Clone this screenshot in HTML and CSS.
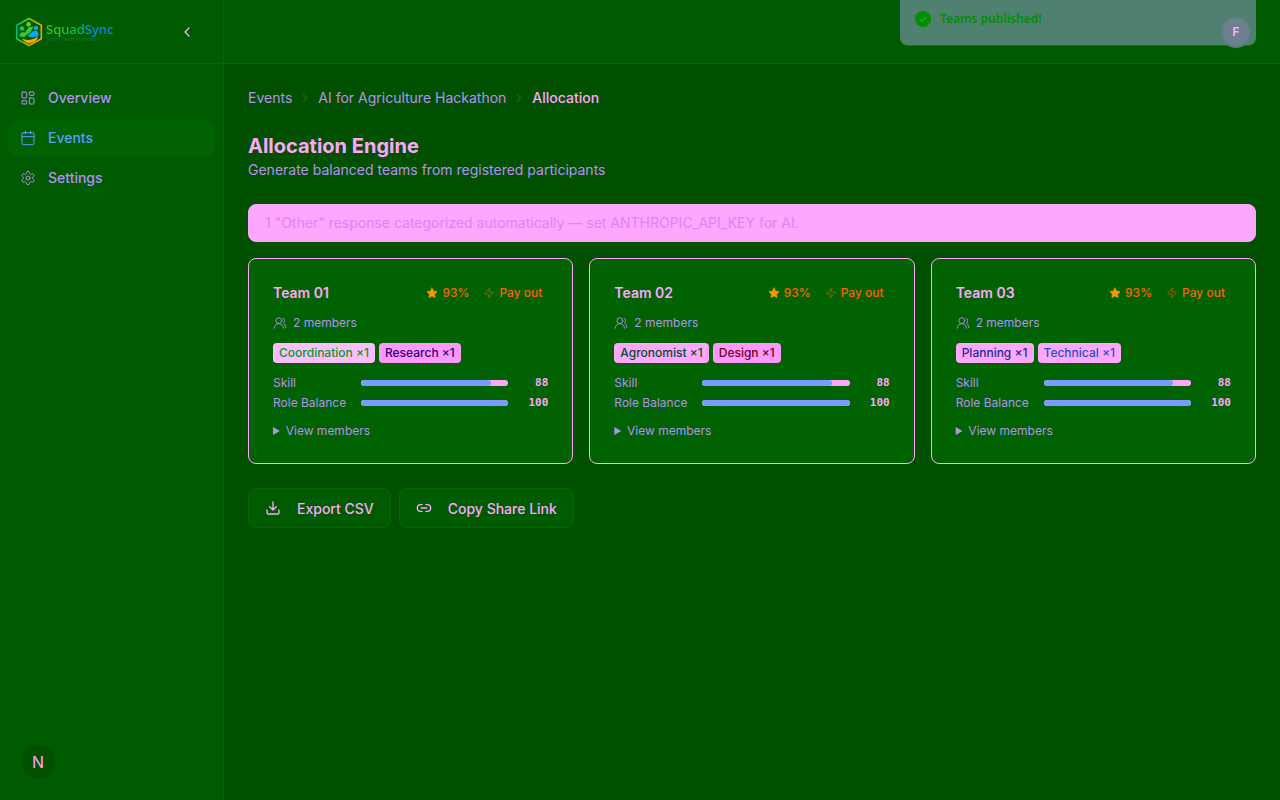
FILE: index.html
```html
<!DOCTYPE html>
<html lang="en">
  <head>
    <meta charset="utf-8">
    <meta name="viewport" content="width=device-width, initial-scale=1">
    <title>SquadSync</title>
    <link rel="stylesheet" href="styles.css">
  </head>

  <body>
    <svg class="sprite" aria-hidden="true">
      <symbol id="users" viewBox="0 0 24 24"><path d="M18 21a8 8 0 0 0-16 0"/><circle cx="10" cy="8" r="5"/><path d="M22 20c0-3.370-2-6.500-4-8a5 5 0 0 0-.450-8.300"/></symbol>
      <symbol id="star" viewBox="0 0 24 24"><path d="M12 2l3.100 6.300 6.900 1-5 4.900 1.200 6.800-6.200-3.200L5.800 21 7 14.200 2 9.300l6.900-1z"/></symbol>
      <symbol id="zap" viewBox="0 0 24 24"><path d="M4 14a1 1 0 0 1-.780-1.630l9.900-10.200a.5.5 0 0 1 .860.460l-1.920 6.020A1 1 0 0 0 13 10h7a1 1 0 0 1 .780 1.630l-9.900 10.200a.5.5 0 0 1-.860-.460l1.920-6.020A1 1 0 0 0 11 14z"/></symbol>
      <symbol id="chevron" viewBox="0 0 24 24"><path d="m9 18 6-6-6-6"/></symbol>
    </svg>

    <div class="layout">
      <aside class="sidebar">
        <div class="brand">
          <a href="#" class="logo">
            <svg class="logo-mark" viewBox="0 0 28 30" aria-hidden="true">
              <defs>
                <linearGradient id="hex" x1="0" x2="1" y1="0.3" y2="0.6">
                  <stop offset="0" stop-color="#00b48c"/>
                  <stop offset="0.4" stop-color="#62cc20"/>
                  <stop offset="0.8" stop-color="#ff9c00"/>
                </linearGradient>
              </defs>
              <path d="M14 1.500l12.300 6.800v13.600L14 28.500 1.700 21.900V8.300z" fill="none" stroke="url(#hex)" stroke-width="1.600"/>
              <circle cx="13.500" cy="7.200" r="2.200" fill="#7ed000"/>
              <circle cx="7" cy="11.500" r="2.200" fill="#18c850"/>
              <circle cx="21" cy="11" r="2.200" fill="#00a8f0"/>
              <path d="M4.500 20c-.5-4 2-5.500 5.500-4.500l4-5.500 4.500-.5c-1 3-4 7.500-7 8.500l-2 3z" fill="#30cc40"/>
              <path d="M12 18.500c3-.5 4-4 7-4.500 3-1 5 1 4.500 4.500-3 2-8 3-11.500 0z" fill="#00a8ff"/>
              <path d="M7 21.500c5 2.500 11 1.500 16-2-.5 4-5 6-9 7-3-1-6-2.500-7-5z" fill="#ffa800"/>
              <path d="M5 19.500c3 2 6 .5 8-2" fill="none" stroke="#005a00" stroke-width="1"/>
            </svg>
            <span class="logo-text">
              <span class="logo-name">SquadSync</span>
              <span class="logo-tag">Smart Team Formation</span>
            </span>
          </a>
          <button class="collapse" aria-label="Collapse sidebar">
            <svg class="icon flip" aria-hidden="true"><use href="#chevron"/></svg>
          </button>
        </div>

        <nav class="nav">
          <a href="#" class="nav-link">
            <svg class="icon" viewBox="0 0 24 24" aria-hidden="true"><rect x="3" y="3" width="7" height="9" rx="1"/><rect x="14" y="3" width="7" height="5" rx="1"/><rect x="14" y="12" width="7" height="9" rx="1"/><rect x="3" y="16" width="7" height="5" rx="1"/></svg>
            Overview
          </a>
          <a href="#" class="nav-link active">
            <svg class="icon" viewBox="0 0 24 24" aria-hidden="true"><path d="M8 2v4M16 2v4M3 10h18"/><rect x="3" y="4" width="18" height="18" rx="2"/></svg>
            Events
          </a>
          <a href="#" class="nav-link">
            <svg class="icon" viewBox="0 0 24 24" aria-hidden="true"><path d="M12.220 2h-.440a2 2 0 0 0-2 2v.180a2 2 0 0 1-1 1.730l-.430.250a2 2 0 0 1-2 0l-.150-.080a2 2 0 0 0-2.730.730l-.220.380a2 2 0 0 0 .730 2.730l.150.100a2 2 0 0 1 1 1.720v.510a2 2 0 0 1-1 1.740l-.150.090a2 2 0 0 0-.730 2.730l.220.380a2 2 0 0 0 2.730.730l.150-.080a2 2 0 0 1 2 0l.430.250a2 2 0 0 1 1 1.730V20a2 2 0 0 0 2 2h.440a2 2 0 0 0 2-2v-.180a2 2 0 0 1 1-1.730l.430-.250a2 2 0 0 1 2 0l.150.080a2 2 0 0 0 2.730-.730l.220-.390a2 2 0 0 0-.730-2.730l-.150-.080a2 2 0 0 1-1-1.740v-.500a2 2 0 0 1 1-1.740l.150-.090a2 2 0 0 0 .730-2.730l-.220-.380a2 2 0 0 0-2.730-.730l-.150.080a2 2 0 0 1-2 0l-.430-.250a2 2 0 0 1-1-1.730V4a2 2 0 0 0-2-2z"/><circle cx="12" cy="12" r="3"/></svg>
            Settings
          </a>
        </nav>
      </aside>

      <div class="page">
        <header class="topbar">
          <button class="avatar" aria-label="Account">F</button>
        </header>

        <main class="content">
          <nav class="breadcrumb">
            <a href="#">Events</a>
            <svg class="sep" aria-hidden="true"><use href="#chevron"/></svg>
            <a href="#">AI for Agriculture Hackathon</a>
            <svg class="sep" aria-hidden="true"><use href="#chevron"/></svg>
            <span class="current">Allocation</span>
          </nav>

          <div class="heading">
            <h1>Allocation Engine</h1>
            <p>Generate balanced teams from registered participants</p>
          </div>

          <p class="notice">1 "Other" response categorized automatically — set ANTHROPIC_API_KEY for AI.</p>

          <div class="teams">
            <section class="card">
              <div class="card-head">
                <h2>Team 01</h2>
                <span class="score"><svg class="star" aria-hidden="true"><use href="#star"/></svg>93%</span>
                <span class="payout"><svg class="zap" aria-hidden="true"><use href="#zap"/></svg>Pay out</span>
              </div>
              <p class="members"><svg class="users" aria-hidden="true"><use href="#users"/></svg>2 members</p>
              <div class="chips">
                <span class="chip coordination">Coordination ×1</span>
                <span class="chip research">Research ×1</span>
              </div>
              <div class="stats">
                <div class="stat"><span class="label">Skill</span><div class="bar"><div class="fill" style="width: 88%"></div></div><span class="value">88</span></div>
                <div class="stat"><span class="label">Role Balance</span><div class="bar"><div class="fill" style="width: 100%"></div></div><span class="value">100</span></div>
              </div>
              <details><summary>View members</summary></details>
            </section>

            <section class="card">
              <div class="card-head">
                <h2>Team 02</h2>
                <span class="score"><svg class="star" aria-hidden="true"><use href="#star"/></svg>93%</span>
                <span class="payout"><svg class="zap" aria-hidden="true"><use href="#zap"/></svg>Pay out</span>
              </div>
              <p class="members"><svg class="users" aria-hidden="true"><use href="#users"/></svg>2 members</p>
              <div class="chips">
                <span class="chip agronomist">Agronomist ×1</span>
                <span class="chip design">Design ×1</span>
              </div>
              <div class="stats">
                <div class="stat"><span class="label">Skill</span><div class="bar"><div class="fill" style="width: 88%"></div></div><span class="value">88</span></div>
                <div class="stat"><span class="label">Role Balance</span><div class="bar"><div class="fill" style="width: 100%"></div></div><span class="value">100</span></div>
              </div>
              <details><summary>View members</summary></details>
            </section>

            <section class="card">
              <div class="card-head">
                <h2>Team 03</h2>
                <span class="score"><svg class="star" aria-hidden="true"><use href="#star"/></svg>93%</span>
                <span class="payout"><svg class="zap" aria-hidden="true"><use href="#zap"/></svg>Pay out</span>
              </div>
              <p class="members"><svg class="users" aria-hidden="true"><use href="#users"/></svg>2 members</p>
              <div class="chips">
                <span class="chip planning">Planning ×1</span>
                <span class="chip technical">Technical ×1</span>
              </div>
              <div class="stats">
                <div class="stat"><span class="label">Skill</span><div class="bar"><div class="fill" style="width: 88%"></div></div><span class="value">88</span></div>
                <div class="stat"><span class="label">Role Balance</span><div class="bar"><div class="fill" style="width: 100%"></div></div><span class="value">100</span></div>
              </div>
              <details><summary>View members</summary></details>
            </section>
          </div>

          <div class="actions">
            <button class="btn">
              <svg class="icon bold" viewBox="0 0 24 24" aria-hidden="true"><path d="M21 15v4a2 2 0 0 1-2 2H5a2 2 0 0 1-2-2v-4M7 10l5 5 5-5M12 15V3"/></svg>
              Export CSV
            </button>
            <button class="btn">
              <svg class="icon bold" viewBox="0 0 24 24" aria-hidden="true"><path d="M9 17H7A5 5 0 0 1 7 7h2M15 7h2a5 5 0 1 1 0 10h-2M8 12h8"/></svg>
              Copy Share Link
            </button>
          </div>
        </main>
      </div>
    </div>

    <div class="toast" role="status">
      <svg class="toast-icon" viewBox="0 0 16 16" aria-hidden="true"><circle cx="8" cy="8" r="8" fill="#009000"/><path d="M5 8.500l2 2 4-4.500" fill="none" stroke="#50a060" stroke-width="1"/></svg>
      Teams published!
    </div>

    <button class="dev-badge" aria-label="Open dev tools">N</button>
  </body>
</html>
```

FILE: styles.css
```css
*{
  box-sizing: border-box;
}

body{
  margin: 0;
  background-color: #005000;
  color: #ffa6ff;
  font-family: Inter, sans-serif;
  font-size: 14px;
  line-height: 20px;
}

h1, h2, p{
  margin: 0;
}

a{
  color: inherit;
  text-decoration: none;
}

button{
  font-family: inherit;
  color: inherit;
  cursor: pointer;
}

svg{
  flex-shrink: 0;
  fill: none;
  stroke: currentColor;
  stroke-width: 1.5;
  stroke-linecap: round;
  stroke-linejoin: round;
}

.sprite{
  display: none;
}

.icon{
  width: 16px;
  height: 16px;
}
.icon.bold{
  stroke-width: 2;
}
.icon.flip{
  transform: rotate(180deg);
  stroke-width: 2;
}

.layout{
  display: flex;
  min-height: 100vh;
}

/* sidebar */
.sidebar{
  width: 224px;
  flex-shrink: 0;
  background-color: #005a00;
  border-right: 1px solid #006c00;
}

.brand{
  display: flex;
  align-items: center;
  justify-content: space-between;
  height: 64px;
  padding: 0 24px 0 15px;
  border-bottom: 1px solid #006c00;
}

.logo{
  display: flex;
  align-items: center;
  gap: 3px;
}

.logo-mark{
  width: 28px;
  height: 30px;
  stroke: none;
}

.logo-text{
  display: flex;
  flex-direction: column;
}

.logo-name{
  font-family: "Noto Sans", sans-serif;
  font-size: 13px;
  line-height: 16px;
  font-weight: 500;
  color: transparent;
  background: linear-gradient(90deg, #48cc18, #00c060 50%, #0094ff 60%, #0084ff);
  background-clip: text;
  -webkit-background-clip: text;
}

.logo-tag{
  font-size: 5px;
  line-height: 5px;
  color: #007c38;
}

.collapse{
  display: flex;
  padding: 4px;
  border: none;
  background: none;
}

.nav{
  display: flex;
  flex-direction: column;
  gap: 4px;
  padding: 16px 8px;
}

.nav-link{
  display: flex;
  align-items: center;
  gap: 12px;
  height: 36px;
  padding: 0 12px;
  border-radius: 8px;
  font-weight: 500;
  color: #b490f0;
}
.nav-link.active{
  background-color: #006200;
  color: #5c9cff;
}

/* header and content */
.page{
  flex: 1;
  min-width: 0;
}

.topbar{
  display: flex;
  align-items: center;
  justify-content: flex-end;
  height: 64px;
  padding: 0 28px;
  background-color: #005a00;
  border-bottom: 1px solid #006c00;
}

.avatar{
  position: relative;
  z-index: 20;
  width: 32px;
  height: 32px;
  padding: 0;
  border: none;
  border-radius: 50%;
  background: radial-gradient(circle closest-side, #6c8090 75%, #508070 100%);
  font-size: 12px;
  font-weight: 700;
}

.content{
  padding: 24px;
}

.breadcrumb{
  display: flex;
  align-items: center;
  gap: 6px;
  color: #b490f0;
}
.breadcrumb .current{
  color: #ffa6ff;
  font-weight: 500;
}

.sep{
  width: 14px;
  height: 14px;
  color: #007c00;
  stroke-width: 2;
}

.heading{
  margin: 24px 0;
  color: #b490f0;
}

h1{
  color: #ffa6ff;
  font-size: 20px;
  line-height: 28px;
  font-weight: 700;
}

.notice{
  padding: 8px 16px;
  border: 1px solid #ffa6ff;
  border-radius: 8px;
  background-color: #ffa6ff;
  color: #dc84f8;
}

.teams{
  display: grid;
  grid-template-columns: repeat(3, 1fr);
  gap: 16px;
  margin: 16px 0 24px;
}

.card{
  display: flex;
  flex-direction: column;
  gap: 12px;
  padding: 24px;
  border: 1px solid #ffa6ff;
  border-radius: 8px;
  background-color: #006200;
  color: #b490f0;
  font-size: 12px;
  line-height: 16px;
}

.card-head{
  display: flex;
  align-items: center;
  gap: 8px;
  height: 20px;
  color: #ff6000;
}

h2{
  margin-right: auto;
  color: #ffa6ff;
  font-size: 14px;
  line-height: 20px;
  font-weight: 600;
}

.score, .payout{
  display: flex;
  align-items: center;
  gap: 4px;
  font-weight: 500;
}
.payout{
  padding: 0 6px;
}

.star, .zap{
  width: 12px;
  height: 12px;
}
.star{
  fill: #ff9800;
  stroke: #ff9800;
}
.zap{
  color: #c06000;
}

.members{
  display: flex;
  align-items: center;
  gap: 6px;
}

.users{
  width: 14px;
  height: 14px;
}

.chips{
  display: flex;
  gap: 4px;
}

.chip{
  padding: 2px 6px;
  border-radius: 4px;
  background-color: #ffa6ff;
  font-weight: 500;
}
.coordination{
  background-color: #ffbcff;
  color: #009c20;
}
.research{
  background-color: #ff98ff;
  color: #300080;
}
.agronomist{
  color: #005020;
}
.design{
  background-color: #ff98ff;
  color: #780020;
}
.planning{
  color: #1c2c98;
}
.technical{
  color: #1c54c8;
}

.stats{
  display: flex;
  flex-direction: column;
  gap: 4px;
}

.stat{
  display: flex;
  align-items: center;
  gap: 8px;
}

.label{
  width: 80px;
}

.bar{
  flex: 1;
  height: 6px;
  border-radius: 3px;
  background-color: #ffa6ff;
  overflow: hidden;
}

.fill{
  height: 100%;
  border-radius: 3px;
  background-color: #789cff;
}

.value{
  width: 32px;
  text-align: right;
  color: #ffa6ff;
  font-family: "DejaVu Sans Mono", monospace;
  font-size: 11px;
  font-weight: 600;
}

summary{
  cursor: pointer;
}

.actions{
  display: flex;
  gap: 8px;
}

.btn{
  display: flex;
  align-items: center;
  gap: 16px;
  height: 40px;
  padding: 0 16px;
  border: 1px solid #006a00;
  border-radius: 8px;
  background-color: #005a00;
  font-size: 14px;
  font-weight: 500;
}

/* floating things */
.toast{
  position: fixed;
  top: -8px;
  right: 24px;
  z-index: 10;
  display: flex;
  align-items: center;
  gap: 9px;
  width: 356px;
  height: 54px;
  padding: 0 15px;
  border-bottom: 1px solid #008400;
  border-radius: 8px;
  background-color: #508070;
  color: #009000;
  font-family: "Noto Sans", sans-serif;
  font-size: 12px;
  font-weight: 600;
}

.toast-icon{
  width: 16px;
  height: 16px;
  stroke: none;
}

.dev-badge{
  position: fixed;
  left: 20px;
  bottom: 20px;
  width: 36px;
  height: 36px;
  padding: 0;
  border: 1px solid #005c00;
  border-radius: 50%;
  background-color: #005000;
  font-size: 16px;
}
```
